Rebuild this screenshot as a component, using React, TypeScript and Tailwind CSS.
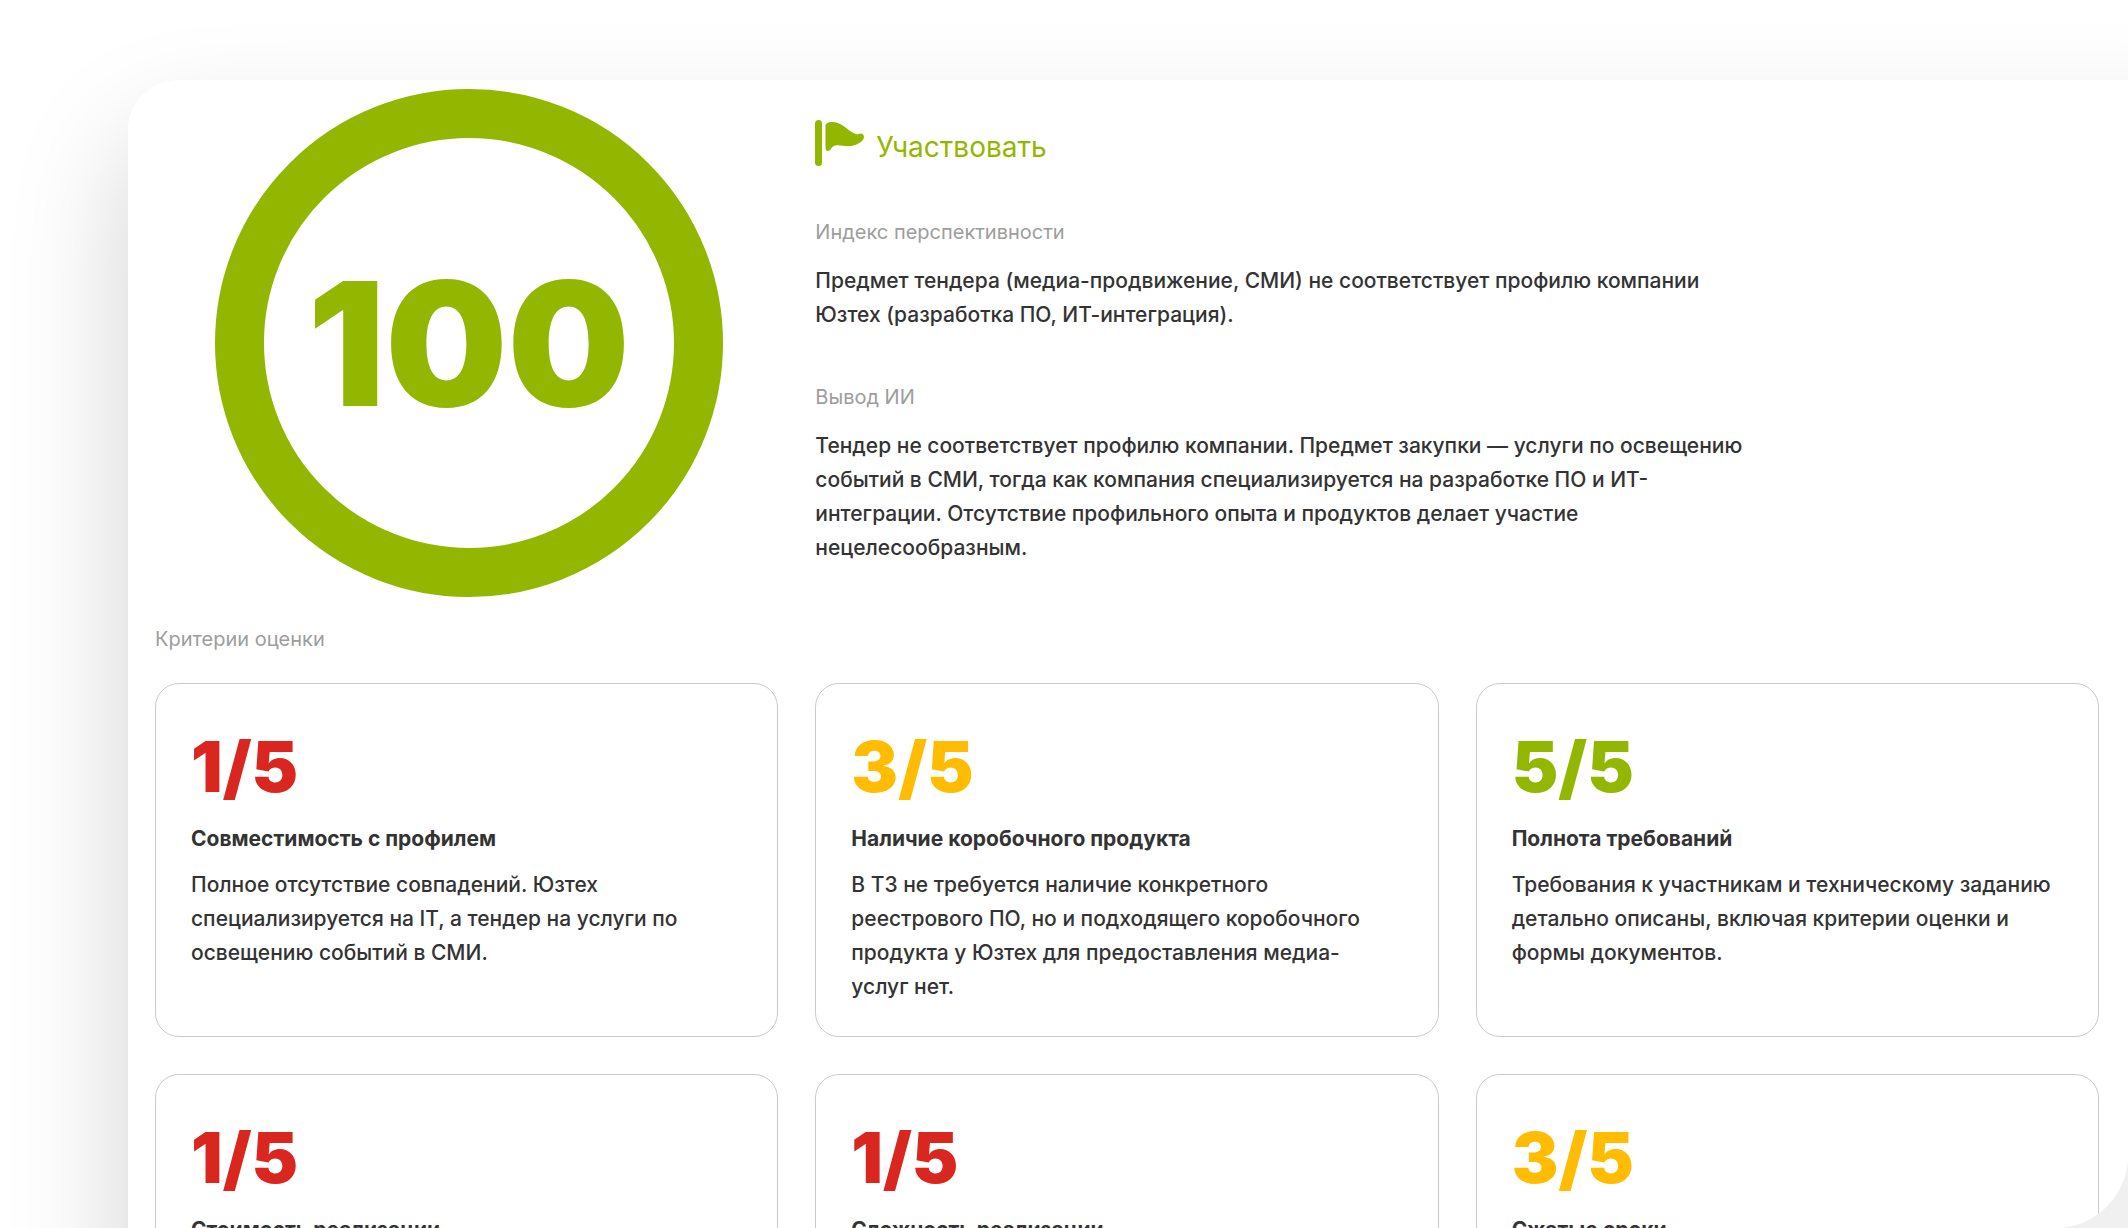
import { clsx } from "clsx";

type Criterion = {
  score: number;
  title: string;
  text: string;
};

const criteria: Criterion[] = [
  {
    score: 1,
    title: "Совместимость с профилем",
    text: "Полное отсутствие совпадений. Юзтех специализируется на IT, а тендер на услуги по освещению событий в СМИ.",
  },
  {
    score: 3,
    title: "Наличие коробочного продукта",
    text: "В ТЗ не требуется наличие конкретного реестрового ПО, но и подходящего коробочного продукта у Юзтех для предоставления медиа-услуг нет.",
  },
  {
    score: 5,
    title: "Полнота требований",
    text: "Требования к участникам и техническому заданию детально описаны, включая критерии оценки и формы документов.",
  },
  { score: 1, title: "Стоимость реализации", text: "" },
  { score: 1, title: "Сложность реализации", text: "" },
  { score: 3, title: "Сжатые сроки", text: "" },
];

function FlagIcon() {
  return (
    <svg viewBox="0 0 49 46" className="h-[46px] w-[49px]" fill="currentColor" aria-hidden="true">
      <rect x="0" y="0" width="7" height="46" rx="3.5" />
      <path d="M10.5 6C10.5 3.500 13 2 17.500 2C23 2 27.500 5 32 8.500C36 11.700 40 14.500 43 14.300C46.500 12.300 49 14 49 17.500C48.500 21.500 41 26.200 33 26.200C29 26.200 25.500 25 21.500 25.300C18 25.600 16.800 27.500 15.500 29.500C13.500 32 10.500 31 10.500 28Z" />
    </svg>
  );
}

function ScoreRing(props: { value: number }) {
  return (
    <div className="flex size-[508px] items-center justify-center rounded-full border-[49px] border-[#93b700]">
      <span className="text-[172px] leading-none font-black text-[#93b700]">{props.value}</span>
    </div>
  );
}

function Section(props: { label: string; text: string }) {
  return (
    <section>
      <h2 className="text-[20px] leading-[28px] text-[#9d9d9d]">{props.label}</h2>
      <p className="mt-[18px] text-[21px] leading-[34px] font-medium text-[#333333]">{props.text}</p>
    </section>
  );
}

function CriterionCard(props: { criterion: Criterion }) {
  const { score, title, text } = props.criterion;

  return (
    <li className="min-h-[354px] rounded-3xl border border-[#cacaca] pt-[47px] pr-[42px] pb-8 pl-[35px]">
      <div
        className={clsx(
          "text-[70px] leading-[72px] font-black",
          score <= 2 && "text-[#d9261f]",
          score === 3 && "text-[#ffbc00]",
          score >= 4 && "text-[#93b700]",
        )}
      >
        {score}/5
      </div>
      <h3 className="mt-[19px] text-[21px] leading-[34px] font-bold text-[#333333]">{title}</h3>
      <p className="mt-3 text-[21px] leading-[34px] font-medium text-[#333333]">{text}</p>
    </li>
  );
}

export default function App() {
  return (
    <div className="bg-[#f0f0f0]">
      <div className="h-screen overflow-hidden rounded-br-[73px] bg-white pt-20 pl-32 font-['Inter',sans-serif]">
        <main className="-mr-32 min-h-screen rounded-tl-[50px] bg-white pt-[9px] pr-[157px] pl-[27px] shadow-[0_60px_120px_rgba(0,0,0,0.18)]">
          <div className="grid grid-cols-3 gap-x-[37px]">
            <div className="flex justify-center pl-1">
              <ScoreRing value={100} />
            </div>
            <div className="col-span-2 max-w-[940px] pt-[31px]">
              <div className="flex items-center gap-3 text-[#93b700]">
                <FlagIcon />
                <span className="pt-2 text-[28px] leading-[36px]">Участвовать</span>
              </div>
              <div className="mt-[52px] flex flex-col gap-[51px]">
                <Section
                  label="Индекс перспективности"
                  text="Предмет тендера (медиа-продвижение, СМИ) не соответствует профилю компании Юзтех (разработка ПО, ИТ-интеграция)."
                />
                <Section
                  label="Вывод ИИ"
                  text="Тендер не соответствует профилю компании. Предмет закупки — услуги по освещению событий в СМИ, тогда как компания специализируется на разработке ПО и ИТ-интеграции. Отсутствие профильного опыта и продуктов делает участие нецелесообразным."
                />
              </div>
            </div>
          </div>
          <h2 className="mt-[28px] text-[20px] leading-[28px] text-[#9d9d9d]">Критерии оценки</h2>
          <ul className="mt-[30px] grid grid-cols-3 gap-[37px]">
            {criteria.map((criterion) => (
              <CriterionCard key={criterion.title} criterion={criterion} />
            ))}
          </ul>
        </main>
      </div>
    </div>
  );
}
